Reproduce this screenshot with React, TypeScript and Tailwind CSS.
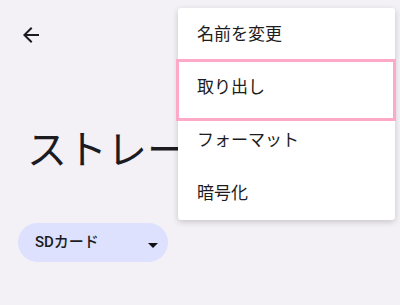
const font = { fontFamily: '"Roboto", "Noto Sans CJK JP", sans-serif' }

const menuItems = ["名前を変更", "取り出し", "フォーマット", "暗号化"]

export default function App() {
  return (
    <div className="relative h-[305px] w-[400px] overflow-hidden bg-[#f3f0f6] text-[#1c1b1f]" style={font}>
      <div className="flex flex-col px-[19px] pt-[23px]">
        <button className="h-6 w-6 text-[#1c1b1f]">
          <svg viewBox="0 0 24 24" className="h-6 w-6" fill="currentColor">
            <path d="M20 11H7.83l5.59-5.59L12 4l-8 8 8 8 1.41-1.41L7.83 13H20v-2z" />
          </svg>
        </button>

        <h1 className="ml-[8px] mt-[80px] whitespace-nowrap text-[40px] leading-[48px] font-normal">ストレージ</h1>

        <div className="mt-[48px] -ml-px flex h-[39px] w-[150px] items-center rounded-full bg-[#dde1fd] pl-[17px] pr-[3px]">
          <span className="text-[15px] font-medium text-[#1a1b23]">SDカード</span>
          <svg viewBox="0 0 24 24" className="ml-auto mt-[5px] h-6 w-6" fill="#111">
            <path d="M7 10l5 5 5-5z" />
          </svg>
        </div>
      </div>

      <div className="absolute left-[178px] top-[8px] w-[217px] rounded-[3px] bg-white shadow-[0_2px_6px_rgba(0,0,0,0.18)]">
        {menuItems.map((item) => (
          <div key={item} className="flex h-[53px] items-center pl-[19px] text-[17px] text-[#1d1b20]">
            {item}
          </div>
        ))}
        <div className="pointer-events-none absolute -left-[2px] top-[51px] h-[62px] w-[220px] border-[3px] border-[#ffa9c9]" />
      </div>
    </div>
  )
}
